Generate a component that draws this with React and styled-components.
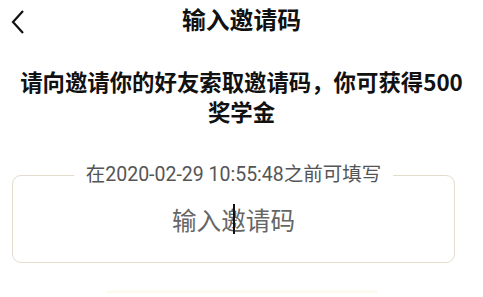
import React from "react";
import styled, { createGlobalStyle } from "styled-components";

const Global = createGlobalStyle`
  html, body {
    margin: 0;
    padding: 0;
    background: #fff;
    font-family: "Noto Sans CJK SC", "Noto Sans", sans-serif;
  }
`;

const Page = styled.div`
  width: 483px;
  height: 297px;
  overflow: hidden;
  display: flex;
  flex-direction: column;
`;

const TopBar = styled.div`
  height: 38px;
  display: flex;
  align-items: center;
  justify-content: center;
  position: relative;
`;

const Back = styled.button`
  position: absolute;
  left: 8px;
  top: 4px;
  border: 0;
  background: none;
  padding: 0;
  width: 22px;
  height: 30px;
`;

const Title = styled.h1`
  margin: 0;
  font-size: 23.8px;
  font-weight: 700;
  color: #111;
  line-height: 30px;
`;

const Intro = styled.p`
  margin: 28px 0 0;
  text-align: center;
  font-size: 22.4px;
  font-weight: 700;
  line-height: 30px;
  color: #111;
  white-space: nowrap;
`;

const Box = styled.div`
  position: relative;
  margin: 49px 0 0 12px;
  width: 443px;
  height: 88px;
  box-sizing: border-box;
  border: 1px solid #e3dccd;
  border-radius: 9px;
  display: flex;
  align-items: center;
  justify-content: center;
`;

const Hint = styled.span`
  position: absolute;
  left: 50%;
  top: -12px;
  transform: translateX(-50%);
  padding: 0 12px;
  background: #fff;
  font-family: Roboto, "Noto Sans CJK SC", sans-serif;
  font-size: 19.5px;
  color: #555;
  line-height: 22px;
  white-space: nowrap;
`;

const Placeholder = styled.div`
  font-size: 24.6px;
  color: #666;
  line-height: 32px;
  position: relative;
`;

const Caret = styled.span`
  position: absolute;
  left: 61px;
  top: 1px;
  width: 2px;
  height: 30px;
  background: #111;
`;

const Footer = styled.div`
  margin: 26px auto 0;
  width: 270px;
  height: 4px;
  background: linear-gradient(#fff, #fcf7e6);
`;

export default function App() {
  return (
    <Page>
      <Global />
      <TopBar>
        <Back aria-label="back">
          <svg width="22" height="30" viewBox="0 0 22 30">
            <path d="M15 7 L5 18 L15 29" fill="none" stroke="#111" strokeWidth="2.2" />
          </svg>
        </Back>
        <Title>输入邀请码</Title>
      </TopBar>
      <Intro>
        请向邀请你的好友索取邀请码，你可获得500
        <br />
        奖学金
      </Intro>
      <Box>
        <Hint>在2020-02-29 10:55:48之前可填写</Hint>
        <Placeholder>
          输入邀请码
          <Caret />
        </Placeholder>
      </Box>
      <Footer />
    </Page>
  );
}
